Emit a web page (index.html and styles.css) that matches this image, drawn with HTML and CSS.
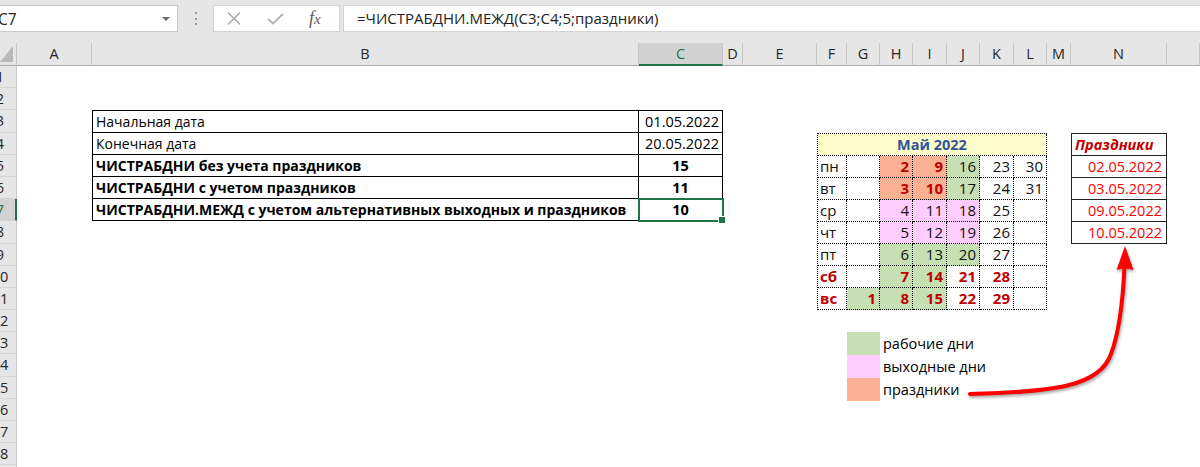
FILE: index.html
```html
<!DOCTYPE html>
<html lang="ru">
<head>
<meta charset="utf-8">
<title>ЧИСТРАБДНИ.МЕЖД</title>
<link rel="stylesheet" href="styles.css">
</head>
<body>
<div class="app">
  <div class="toolbar">
    <div class="namebox"><span class="name">C7</span><span class="dd"></span></div>
    <div class="grip"><i></i><i></i><i></i></div>
    <div class="fbtns">
      <svg class="ico-x" width="14" height="13" viewBox="0 0 14 13"><path d="M1 0.5 L13 12.5 M13 0.5 L1 12.5" stroke="#a3a3a3" stroke-width="1.3" fill="none"/></svg>
      <svg class="ico-ok" width="17" height="12" viewBox="0 0 17 12"><path d="M1 6 L6 10.5 L16 1" stroke="#b3b3b3" stroke-width="1.8" fill="none"/></svg>
      <span class="fx">f<span class="fx-x">x</span></span>
    </div>
    <div class="formula">=ЧИСТРАБДНИ.МЕЖД(C3;C4;5;праздники)</div>
  </div>

  <div class="sheet">
    <div class="corner"><span class="tri"></span></div>
    <div class="ch">A</div>
    <div class="ch">B</div>
    <div class="ch ch-sel">C</div>
    <div class="ch">D</div>
    <div class="ch">E</div>
    <div class="ch">F</div>
    <div class="ch">G</div>
    <div class="ch">H</div>
    <div class="ch">I</div>
    <div class="ch">J</div>
    <div class="ch">K</div>
    <div class="ch">L</div>
    <div class="ch">M</div>
    <div class="ch">N</div>
    <div class="ch"></div>

    <div class="rowheads">
      <div class="rh"><span>1</span></div>
      <div class="rh"><span>2</span></div>
      <div class="rh"><span>3</span></div>
      <div class="rh"><span>4</span></div>
      <div class="rh"><span>5</span></div>
      <div class="rh"><span>6</span></div>
      <div class="rh rh-sel"><span>7</span></div>
      <div class="rh"><span>8</span></div>
      <div class="rh"><span>9</span></div>
      <div class="rh"><span>10</span></div>
      <div class="rh"><span>11</span></div>
      <div class="rh"><span>12</span></div>
      <div class="rh"><span>13</span></div>
      <div class="rh"><span>14</span></div>
      <div class="rh"><span>15</span></div>
      <div class="rh"><span>16</span></div>
      <div class="rh"><span>17</span></div>
      <div class="rh"><span>18</span></div>
      <div class="rh"><span>19</span></div>
    </div>

    <div class="tbl">
      <div class="tc lbl">Начальная дата</div><div class="tc val">01.05.2022</div>
      <div class="tc lbl">Конечная дата</div><div class="tc val">20.05.2022</div>
      <div class="tc lbl b">ЧИСТРАБДНИ без учета праздников</div><div class="tc num">15</div>
      <div class="tc lbl b">ЧИСТРАБДНИ с учетом праздников</div><div class="tc num">11</div>
      <div class="tc lbl b">ЧИСТРАБДНИ.МЕЖД с учетом альтернативных выходных и праздников</div><div class="tc num sel">10</div>
    </div>

    <div class="cal">
      <div class="cc title">Май 2022</div>

      <div class="cc day">пн</div><div class="cc"></div><div class="cc hol r">2</div><div class="cc hol r">9</div><div class="cc work">16</div><div class="cc">23</div><div class="cc">30</div>
      <div class="cc day">вт</div><div class="cc"></div><div class="cc hol r">3</div><div class="cc hol r">10</div><div class="cc work">17</div><div class="cc">24</div><div class="cc">31</div>
      <div class="cc day">ср</div><div class="cc"></div><div class="cc off">4</div><div class="cc off">11</div><div class="cc off">18</div><div class="cc">25</div><div class="cc"></div>
      <div class="cc day">чт</div><div class="cc"></div><div class="cc off">5</div><div class="cc off">12</div><div class="cc off">19</div><div class="cc">26</div><div class="cc"></div>
      <div class="cc day">пт</div><div class="cc"></div><div class="cc work">6</div><div class="cc work">13</div><div class="cc work">20</div><div class="cc">27</div><div class="cc"></div>
      <div class="cc day r">сб</div><div class="cc"></div><div class="cc work r">7</div><div class="cc work r">14</div><div class="cc r">21</div><div class="cc r">28</div><div class="cc"></div>
      <div class="cc day r">вс</div><div class="cc work r">1</div><div class="cc work r">8</div><div class="cc work r">15</div><div class="cc r">22</div><div class="cc r">29</div><div class="cc"></div>
    </div>

    <div class="hols">
      <div class="hc hc-head">Праздники</div>
      <div class="hc">02.05.2022</div>
      <div class="hc">03.05.2022</div>
      <div class="hc">09.05.2022</div>
      <div class="hc">10.05.2022</div>
    </div>

    <div class="legend">
      <div class="lg"><span class="sw sw-work"></span><span class="lt">рабочие дни</span></div>
      <div class="lg"><span class="sw sw-off"></span><span class="lt">выходные дни</span></div>
      <div class="lg"><span class="sw sw-hol"></span><span class="lt">праздники</span></div>
    </div>
  </div>

  <svg class="arrow" width="1200" height="467" viewBox="0 0 1200 467">
    <path d="M970 394 C 1055 392, 1100 386, 1111 354 C 1120 330, 1123 300, 1124.5 266" stroke="#ff0000" stroke-width="4" fill="none" stroke-linecap="round"/>
    <path d="M1125 246 L1133.5 270 Q1125 267 1116.5 270 Z" fill="#ff0000"/>
  </svg>
</div>
</body>
</html>
```

FILE: styles.css
```css
* { box-sizing: border-box; margin: 0; padding: 0; }

html, body {
  width: 1200px;
  height: 467px;
  overflow: hidden;
  background: #ffffff;
}

body {
  font-family: "Open Sans", "Noto Sans", sans-serif;
  color: #000;
}

.app {
  position: relative;
  width: 1200px;
  height: 467px;
  overflow: hidden;
}

/* ---------- toolbar / formula bar ---------- */
.toolbar {
  height: 43px;
  background: #e6e6e6;
  display: flex;
  align-items: flex-start;
  padding-top: 5px;
}

.namebox {
  width: 183px;
  height: 27px;
  margin-left: -5px;
  background: #fff;
  border: 1px solid #c9c9c9;
  display: flex;
  align-items: center;
  padding-left: 2px;
  font-size: 15.5px;
  color: #222;
}
.name { flex: 1; }
.dd {
  width: 0;
  height: 0;
  border-left: 4px solid transparent;
  border-right: 4px solid transparent;
  border-top: 4px solid #6b6b6b;
  margin-right: 7px;
}

.grip {
  display: flex;
  flex-direction: column;
  gap: 3.6px;
  margin-left: 17px;
  margin-top: 7px;
}
.grip i {
  display: block;
  width: 2px;
  height: 2px;
  background: #9c9c9c;
}

.fbtns {
  width: 127px;
  height: 27px;
  margin-left: 16px;
  background: #fff;
  border: 1px solid #d3d3d3;
  display: flex;
  align-items: center;
}
.ico-x { margin-left: 13px; }
.ico-ok { margin-left: 26px; }
.fx {
  margin-left: 25px;
  font-family: "Liberation Serif", "DejaVu Serif", serif;
  font-style: italic;
  font-size: 18px;
  color: #5a5a5a;
  line-height: 1;
  margin-top: -2px;
}
.fx-x { font-size: 15px; }

.formula {
  flex: 1;
  height: 27px;
  margin-left: 3px;
  margin-right: -10px;
  background: #fff;
  border: 1px solid #d3d3d3;
  padding-left: 13px;
  font-size: 15px;
  line-height: 25px;
  color: #222;
  white-space: nowrap;
}

/* ---------- sheet grid ---------- */
.sheet {
  display: grid;
  grid-template-columns: 17px 75px 547px 84px 20px 74px 30px 33px 33px 34px 33px 34px 33px 24px 96px 1fr;
  grid-template-rows: 23px repeat(19, 22.2px);
  font-size: 14.5px;
}

.corner {
  grid-row: 1;
  background: #e6e6e6;
  border-right: 1px solid #c6c6c6;
  border-bottom: 1px solid #ababab;
  position: relative;
}
.tri {
  position: absolute;
  right: 3px;
  bottom: 3px;
  width: 0;
  height: 0;
  border-left: 13px solid transparent;
  border-bottom: 16px solid #b9b9b9;
}

.ch {
  grid-row: 1;
  background: #e6e6e6;
  border-right: 1px solid #c6c6c6;
  border-bottom: 1px solid #ababab;
  text-align: center;
  line-height: 22px;
  color: #262626;
}
.ch-sel {
  background: #d2d2d2;
  color: #217346;
  border-bottom: 2px solid #217346;
}

.rowheads {
  grid-column: 1;
  grid-row: 2 / -1;
  display: flex;
  flex-direction: column;
  background: #e6e6e6;
  overflow: hidden;
}
.rh {
  flex: none;
  height: 22.2px;
  border-right: 1px solid #c6c6c6;
  border-bottom: 1px solid #d5d5d5;
  overflow: hidden;
  color: #262626;
}
.rh span {
  display: block;
  width: 34px;
  margin-left: -17px;
  text-align: center;
  line-height: 21px;
}
.rh-sel {
  background: #d2d2d2;
  color: #217346;
  border-right: 2px solid #217346;
}

/* ---------- main table ---------- */
.tbl {
  grid-column: 3 / 5;
  grid-row: 4 / 9;
  display: grid;
  grid-template-columns: minmax(0, 1fr) 84px;
  grid-template-rows: repeat(5, 1fr);
  border-top: 1px solid #000;
  border-left: 1px solid #000;
}
.tc {
  border-right: 1px solid #000;
  border-bottom: 1px solid #000;
  line-height: 21px;
  white-space: nowrap;
  min-width: 0;
}
.lbl {
  padding-left: 3px;
  font-size: 14px;
  overflow: hidden;
}
.b { font-weight: 700; }
.val { text-align: right; padding-right: 3px; }
.num { text-align: center; font-weight: 700; }
.sel {
  position: relative;
  outline: 2px solid #217346;
  outline-offset: -1px;
}
.sel::after {
  content: "";
  position: absolute;
  right: -4px;
  bottom: -4px;
  width: 6px;
  height: 6px;
  background: #217346;
  border: 1px solid #fff;
}

/* ---------- calendar ---------- */
.cal {
  grid-column: 7 / 14;
  grid-row: 5 / 13;
  display: grid;
  grid-template-columns: 29px 33px 33px 34px 33px 34px 33px;
  grid-template-rows: repeat(8, 1fr);
  border-top: 1px dotted #000;
  border-left: 1px dotted #000;
  font-size: 15px;
}
.cc {
  border-right: 1px dotted #000;
  border-bottom: 1px dotted #000;
  text-align: right;
  padding-right: 3px;
  line-height: 21px;
  color: #111;
}
.cc.title {
  grid-column: 1 / -1;
  background: #fffdcc;
  color: #2f5597;
  font-weight: 700;
  text-align: center;
  padding-right: 0;
  font-size: 14.5px;
}
.cc.day {
  text-align: left;
  padding-left: 2px;
  padding-right: 0;
}
.cc.r { color: #c00000; font-weight: 700; }
.work { background: #c6e0b4; }
.off { background: #ffccff; }
.hol { background: #fbb094; }

/* ---------- holidays ---------- */
.hols {
  grid-column: 15;
  grid-row: 5 / 10;
  display: grid;
  grid-template-rows: repeat(5, 1fr);
  border-top: 1px solid #222;
  border-left: 1px solid #222;
}
.hc {
  border-right: 1px solid #222;
  border-bottom: 1px solid #222;
  text-align: right;
  padding-right: 4px;
  line-height: 21px;
  color: #ff0000;
}
.hc-head {
  text-align: left;
  padding-left: 3px;
  color: #c00000;
  font-weight: 700;
  font-style: italic;
}

/* ---------- legend ---------- */
.legend {
  grid-column: 8 / 15;
  grid-row: 14 / 17;
  display: flex;
  flex-direction: column;
}
.lg {
  flex: 1;
  display: flex;
  align-items: stretch;
  line-height: 22px;
}
.sw { width: 33px; flex: none; }
.sw-work { background: #c6e0b4; }
.sw-off { background: #ffccff; }
.sw-hol { background: #fbb094; }
.lt { padding-left: 3px; padding-top: 1px; white-space: nowrap; }

/* ---------- arrow overlay ---------- */
.arrow {
  position: absolute;
  left: 0;
  top: 0;
  pointer-events: none;
  filter: drop-shadow(1px 2px 1.5px rgba(0, 0, 0, 0.35));
}
```
